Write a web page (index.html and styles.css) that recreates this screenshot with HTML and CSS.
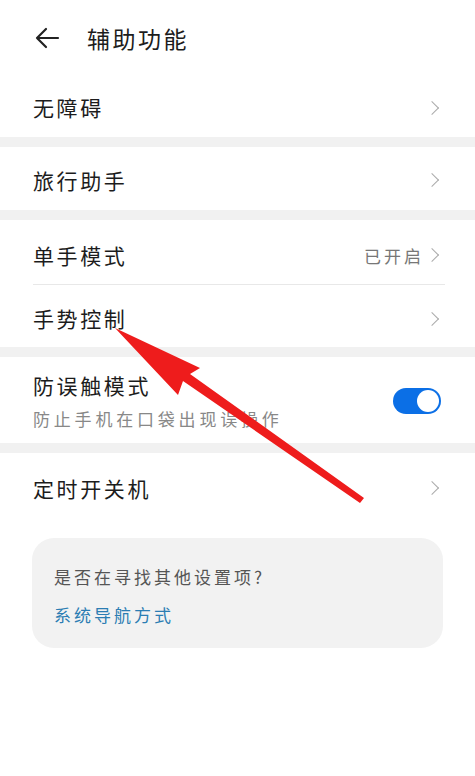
FILE: index.html
```html
<!DOCTYPE html>
<html lang="zh">
<head>
<meta charset="utf-8">
<link rel="stylesheet" href="styles.css">
</head>
<body>
<div class="page">
  <header class="header">
    <svg class="back" width="26" height="22" viewBox="0 0 26 22"><path d="M24 11H3M12 2L3 11l9 9" fill="none" stroke="#222" stroke-width="2.2" stroke-linecap="round" stroke-linejoin="round"/></svg>
    <h1 class="title">辅助功能</h1>
  </header>

  <div class="group">
    <div class="row r1"><span class="label">无障碍</span><span class="chev"></span></div>
  </div>
  <div class="band"></div>
  <div class="group">
    <div class="row r2"><span class="label">旅行助手</span><span class="chev"></span></div>
  </div>
  <div class="band"></div>
  <div class="group">
    <div class="row r3"><span class="label">单手模式</span><span class="right"><span class="value">已开启</span><span class="chev"></span></span></div>
    <div class="divider"></div>
    <div class="row r4"><span class="label">手势控制</span><span class="chev"></span></div>
  </div>
  <div class="band"></div>
  <div class="group">
    <div class="row r5">
      <div class="texts">
        <span class="label">防误触模式</span>
        <span class="sub">防止手机在口袋出现误操作</span>
      </div>
      <span class="toggle"><span class="knob"></span></span>
    </div>
  </div>
  <div class="band"></div>
  <div class="group">
    <div class="row r6"><span class="label">定时开关机</span><span class="chev"></span></div>
  </div>

  <div class="card">
    <p class="q">是否在寻找其他设置项?</p>
    <p class="link">系统导航方式</p>
  </div>

  <svg class="arrow" width="475" height="776" viewBox="0 0 475 776">
    <path d="M360 503 L364 498 L190 374 L200 368 L115 328 L178 395 L183 381 Z" fill="#ee1c1c"/>
  </svg>
</div>
</body>
</html>
```

FILE: styles.css
```css
html, body {
  margin: 0;
  padding: 0;
  background: #fff;
}
body {
  font-family: "Noto Sans CJK SC", "Noto Sans", sans-serif;
  color: #1c1c1c;
}
.page {
  position: relative;
  width: 475px;
  height: 776px;
  overflow: hidden;
}
.header {
  height: 76px;
  display: flex;
  align-items: center;
  padding-left: 34px;
  box-sizing: border-box;
}
.back {
  display: block;
  margin-top: -1px;
}
.title {
  margin: 0 0 0 27px;
  font-size: 23px;
  font-weight: 400;
  letter-spacing: 2.5px;
  line-height: 1;
}
.band {
  height: 10px;
  background: #f1f1f1;
}
.row {
  display: flex;
  align-items: center;
  justify-content: space-between;
  padding: 0 35px 0 33px;
  box-sizing: border-box;
}
.r1 { height: 61px; padding-top: 2px; }
.r2 { height: 63px; padding-top: 3px; }
.r3 { height: 64px; padding-top: 6px; }
.r4 { height: 62px; padding-top: 5px; }
.r5 { height: 86px; padding-top: 2px; }
.r6 { height: 70px; }
.label {
  font-size: 21px;
  letter-spacing: 2.6px;
  line-height: 1;
}
.right {
  display: flex;
  align-items: center;
}
.value {
  font-size: 17px;
  color: #777;
  letter-spacing: 3px;
  margin-right: 3px;
  line-height: 1;
}
.chev {
  width: 9px;
  height: 9px;
  border-top: 1.5px solid #aaa;
  border-right: 1.5px solid #aaa;
  transform: rotate(45deg);
  margin-right: 3px;
}
.divider {
  height: 1px;
  background: #e8e8e8;
  margin: 0 30px 0 33px;
}
.texts {
  display: flex;
  flex-direction: column;
}
.sub {
  font-size: 17px;
  color: #888;
  letter-spacing: 3.8px;
  line-height: 1;
  margin-top: 14px;
}
.toggle {
  width: 48px;
  height: 26px;
  border-radius: 13px;
  background: #0b6fe6;
  position: relative;
  margin-right: -1px;
}
.knob {
  position: absolute;
  right: 2px;
  top: 2px;
  width: 22px;
  height: 22px;
  border-radius: 50%;
  background: #fff;
}
.card {
  margin: 15px 32px 0 32px;
  height: 110px;
  box-sizing: border-box;
  border-radius: 22px;
  background: #f2f2f2;
  padding: 30px 0 0 22px;
}
.card .q,
.card .link {
  margin: 0;
  line-height: 1;
  font-size: 17px;
  letter-spacing: 3px;
}
.card .q {
  color: #555;
}
.card .link {
  color: #2b7db3;
  margin-top: 21px;
}
.arrow {
  position: absolute;
  left: 0;
  top: 0;
  pointer-events: none;
}
```
